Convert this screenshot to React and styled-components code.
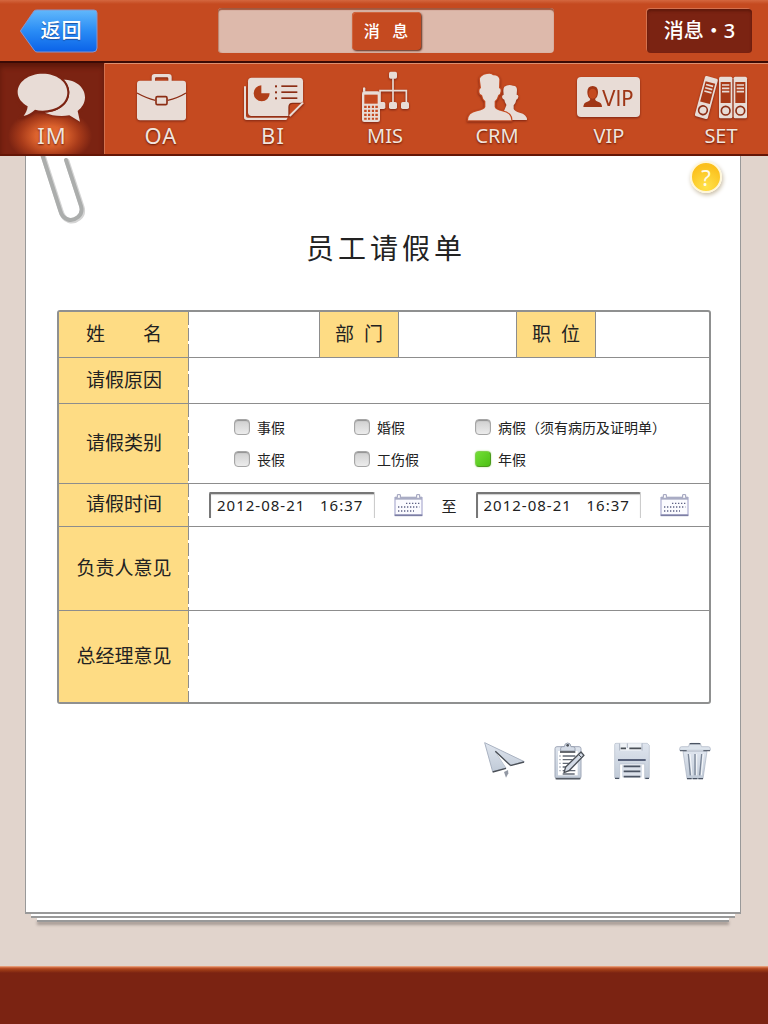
import React, { useState } from "react";
import styled, { createGlobalStyle, css } from "styled-components";

const GlobalStyle = createGlobalStyle`
  *, *::before, *::after { box-sizing: border-box; }
  body {
    margin: 0;
    background: #e1d4cc;
    color: #222;
    font-family: "Noto Sans", "Noto Sans CJK SC", sans-serif;
  }
  button, input, textarea { font: inherit; color: inherit; }
  button { border: 0; padding: 0; background: none; cursor: pointer; }
`;

const Page = styled.div`
  min-height: 100vh;
  display: flex;
  flex-direction: column;
`;

/* ---------- top bar ---------- */

const TopBar = styled.header`
  display: grid;
  grid-template-columns: 1fr 46% 1fr;
  align-items: center;
  height: 63px;
  padding: 0 16px 0 20px;
  background: linear-gradient(#d4673f, #c54a20 4px);
  border-bottom: 2px solid #3b0a05;
`;

const BackButton = styled.button`
  justify-self: start;
  position: relative;
  width: 79px;
  height: 44px;
  padding-left: 4px;
  color: #fff;
  font-size: 20px;
  font-weight: 500;
  line-height: 44px;
  letter-spacing: 1px;
  text-shadow: 0 1px 1px #1a4fa0;

  svg {
    position: absolute;
    inset: 0;
    z-index: 0;
  }
  span { position: relative; }
`;

const SwitchTrack = styled.div`
  display: flex;
  justify-content: center;
  align-items: center;
  height: 45px;
  border-radius: 4px;
  background: #ddb9ab;
  box-shadow: inset 0 2px 1px #a0583f, inset 1px 0 1px #c08a76;
`;

const SwitchButton = styled.button`
  width: 69px;
  height: 38px;
  border-radius: 4px;
  color: #fff;
  background: #c54a20;
  font-size: 16px;
  font-weight: 500;
  line-height: 36px;
  white-space: pre;
  box-shadow: 1px 1px 2px #5b2a1a, inset 1px 1px 0 #d0653e;
`;

const NoticeButton = styled.button`
  justify-self: end;
  width: 105px;
  height: 44px;
  border-radius: 4px;
  color: #fff;
  background: #7b2312;
  font-size: 20px;
  font-weight: 500;
  line-height: 44px;
  white-space: nowrap;
  box-shadow: inset 0 2px 3px #5e180a, -1px -1px 0 #d4714e;
`;

/* ---------- module tabs ---------- */

const Tabs = styled.nav`
  display: flex;
  overflow: hidden;
  height: 93px;
  background: #c54a20;
  border-bottom: 2px solid #641606;
`;

const Tab = styled.a`
  flex: 0 0 112px;
  display: flex;
  flex-direction: column;
  align-items: center;
  padding-top: 7px;
  color: #f1e4dd;
  text-decoration: none;
  box-shadow: inset 0 1px 0 #e08f6d;

  ${(p) =>
    p.$active &&
    css`
      flex-basis: 105px;
      border-right: 1px solid #d4714e;
      box-shadow: inset 0 4px 5px #5e180a;
      background:
        radial-gradient(ellipse 42px 28px at 50px 73px, #ea7138 0%, #dc622d 35%, #a83b1a 70%, transparent 100%),
        #7b2312;
    `}

  svg {
    flex: none;
    filter: drop-shadow(0 1px 1px #7b2312);
  }
`;

const TabLabel = styled.span`
  font-size: ${(p) => (p.$large ? 22 : 20)}px;
  line-height: ${(p) => (p.$large ? 22 : 24)}px;
  letter-spacing: ${(p) => (p.$large ? 1 : 0)}px;
  text-shadow: 0 1px 2px #641606;
`;

/* ---------- sheet of paper ---------- */

const Desk = styled.main`
  flex: 1;
  display: flex;
  flex-direction: column;
  padding: 0 27px 44px 25px;
`;

const Paper = styled.section`
  flex: 1;
  padding: 0 29px 60px 31px;
  background: #fff;
  border: solid #999;
  border-width: 0 1px 2px 1px;
`;

const Leaf = styled.div`
  height: 4px;
  margin: 0 ${(p) => p.$inset}px;
  background: #fff;
  border-bottom: 2px solid #999;
  box-shadow: ${(p) => (p.$last ? "0 3px 3px #a79b95" : "none")};
`;

const PaperTop = styled.div`
  display: flex;
  justify-content: space-between;
  align-items: flex-start;
  height: 72px;
  margin: 0 -11px 0 -17px;
`;

const HelpButton = styled.button`
  width: 32px;
  height: 32px;
  margin-top: 5px;
  border: 2px solid #fff6d8;
  border-radius: 50%;
  color: #fffbe8;
  font-size: 22px;
  line-height: 26px;
  background: radial-gradient(circle at 50% 85%, #ffe24a, #fbc01c 75%);
  box-shadow: 1px 2px 4px #c9bda6;
`;

const Title = styled.h1`
  margin: 0 0 42px;
  padding-left: 4px;
  text-align: center;
  font-size: 28px;
  font-weight: 400;
  line-height: 40px;
  letter-spacing: 4px;
`;

const FormTable = styled.table`
  width: 100%;
  table-layout: fixed;
  border-collapse: separate;
  border-spacing: 0;
  border: 2px solid #8f9090;
  border-radius: 3px;

  col.key { width: 130px; }
  col.subkey { width: 80px; }
  col.name { width: 20%; }
  col.dept { width: 18%; }

  tr:last-child > * { border-bottom: 0; }
`;

const Row = styled.tr`
  height: ${(p) => p.$h}px;
`;

const KeyCell = styled.th`
  padding: 0 0 2px;
  border-bottom: 1px solid #8d8d8d;
  background:
    repeating-linear-gradient(#8d8d8d 0 13px, #fff 13px 16px) right / 1px 100% no-repeat,
    #fedc84;
  font-size: 19px;
  font-weight: 400;
  line-height: 28px;
  white-space: pre;
`;

const SubKeyCell = styled(KeyCell)`
  background: #fedc84;
  border-left: 1px solid #8d8d8d;
  border-right: 1px solid #8d8d8d;
`;

const ValueCell = styled.td`
  height: inherit;
  padding: 0;
  border-bottom: 1px solid #8d8d8d;
`;

const TextField = styled.input`
  display: block;
  width: 100%;
  height: 40px;
  padding: 0 10px;
  border: 0;
  outline: 0;
  background: transparent;
  font-size: 16px;
`;

const Opinion = styled.textarea`
  display: block;
  width: 100%;
  height: 76px;
  padding: 8px 10px;
  border: 0;
  outline: 0;
  resize: none;
  background: transparent;
  font-size: 16px;
`;

const Choices = styled.div`
  display: grid;
  grid-template-columns: 120px 121px 1fr;
  padding: 0 0 2px 45px;
`;

const Choice = styled.label`
  display: flex;
  align-items: center;
  gap: 7px;
  height: 32px;
  font-size: 14px;
  white-space: nowrap;
`;

const Box = styled.input`
  appearance: none;
  flex: none;
  width: 16px;
  height: 16px;
  margin: 0;
  border: 1px solid #a6a6a6;
  border-radius: 4px;
  background: linear-gradient(#cfcfcf, #ececec);
  box-shadow: inset 0 1px 1px #909090;

  &:checked {
    border-color: #7ed04a #4b9a1c #4b9a1c #7ed04a;
    background: linear-gradient(135deg, #72de36, #4cc014);
    box-shadow: 0 0 2px #a9dc8a;
  }
`;

const Period = styled.div`
  display: flex;
  align-items: center;
  gap: 19px;
  padding: 0 20px;
  font-size: 15px;
`;

const DateField = styled.input`
  flex: 1;
  min-width: 0;
  height: 26px;
  padding: 0 0 2px 6px;
  border: solid #777;
  border-width: 2px 1px 0 2px;
  border-right-color: #ccc;
  border-radius: 2px 2px 0 0;
  outline: 0;
  background: #fff;
  font-size: 15px;
  letter-spacing: 1px;
  box-shadow: inset 0 1px 1px #ccc;
`;

const IconButton = styled.button`
  flex: none;
  display: flex;
`;

const Actions = styled.div`
  display: flex;
  justify-content: flex-end;
  align-items: center;
  gap: 29px;
  margin-top: 38px;
`;

const BottomBar = styled.footer`
  height: 58px;
  background: linear-gradient(#f0b18d, #c0532a 2px, #9c3a16 4px, #7b2312 7px);
`;

/* ---------- drawings ---------- */

const CREAM = "#e8dcd6";
const ORANGE = "#c54a20";

const TabIcon = ({ box, children }) => (
  <svg width="70" height="54" viewBox={box} fill={CREAM} aria-hidden="true">
    {children}
  </svg>
);

const ImIcon = () => (
  <TabIcon box="51 210 210 162">
    <path d="M190 239C228 239 255 262 255 292c0 17-9 31-22 41l7 32-32-19c-28 5-54 0-74-8 45-3 74-27 74-62 0-13-7-27-18-37z" />
    <path
      d="M128 221c42 0 74 24 74 56 0 33-32 55-74 55-8 0-16-1-23-3-9 8-20 15-34 19 6-8 11-18 12-29-18-10-30-25-30-42 0-32 33-56 75-56z"
      stroke="#7b2312"
      strokeWidth="12"
      paintOrder="stroke"
    />
  </TabIcon>
);

const OaIcon = () => (
  <TabIcon box="378 210 210 162">
    <path d="M455 244v-13q0-9 9-9h42q9 0 9 9v13h-10v-8q0-4-4-4h-32q-4 0-4 4v8z" />
    <rect x="411" y="242" width="147" height="119" rx="9" />
    <path d="M411 279Q440 295 466 301M503 301Q532 295 558 279" fill="none" stroke="#8c2d14" strokeWidth="4" />
    <rect x="468" y="290" width="33" height="24" rx="4" fill="none" stroke="#8c2d14" strokeWidth="5" />
  </TabIcon>
);

const BiIcon = () => (
  <TabIcon box="54 210 210 162">
    <path d="M72 259h6v88q0 6 6 6h119l-4 7H80q-8 0-8-8z" />
    <path d="M95 233h143q11 0 11 11v60l-42 44H95q-11 0-11-11v-93q0-11 11-11z" />
    <path d="M124 256v24h25a24 24 0 1 1-25-24z" fill="#b03e18" />
    <g fill="#8c2d14">
      <rect x="165" y="256" width="6" height="6" /><rect x="165" y="274" width="6" height="6" /><rect x="165" y="292" width="6" height="6" />
      <rect x="184" y="256" width="48" height="5" /><rect x="184" y="274" width="48" height="5" /><rect x="184" y="292" width="48" height="5" />
    </g>
    <path d="M207 347v-26q0-11 11-11h30v-6h4v6l-44 40z" fill={ORANGE} />
    <path d="M207 348v-27q0-11 11-11h31" fill="none" stroke="#8c2d14" strokeWidth="4" />
    <path d="M209 348l40-40" stroke={CREAM} strokeWidth="6" />
  </TabIcon>
);

const MisIcon = () => (
  <TabIcon box="390 210 210 162">
    <path d="M519 235v75M480 310v-38h79v38" fill="none" stroke={CREAM} strokeWidth="5" />
    <rect x="507" y="215" width="24" height="21" rx="5" />
    <rect x="473" y="306" width="23" height="21" rx="5" />
    <rect x="507" y="306" width="24" height="21" rx="5" />
    <rect x="543" y="306" width="24" height="21" rx="5" />
    <path d="M429 264q3-5 7 0v11h-7z" />
    <rect x="426" y="274" width="54" height="92" rx="7" />
    <rect x="433" y="284" width="40" height="27" fill={ORANGE} />
    <path d="M437 317v42M447 317v42M459 317v42M469 317v42" stroke={ORANGE} strokeWidth="9" strokeDasharray="7 5" />
    <path d="M442 315v46M453 315v46M464 315v46" stroke={CREAM} strokeWidth="4" />
  </TabIcon>
);

const CrmIcon = () => (
  <TabIcon box="93 30 210 162">
    <path d="M220 80q12-8 26-3 12 0 12 13l-1 14q6 1 5 7-1 7-6 8-2 11-8 17v11q3 7 18 11 22 5 22 22h-80l18-44v-2q-5-7-6-15-6-1-7-8 0-6 5-7l-1-12q0-8 3-12z" />
    <path
      d="M150 50q8-7 18-8 14-3 18 4 16-1 19 12l-1 26q6 1 5 9-1 10-7 12-3 12-11 19v17q3 9 22 13 28 5 28 27H111q0-22 27-27 21-4 25-13v-17q-8-7-10-19-8-2-8-12 0-8 5-9l-3-22q-2-8 3-12z"
      stroke={ORANGE}
      strokeWidth="7"
      paintOrder="stroke"
    />
  </TabIcon>
);

const VipIcon = () => (
  <TabIcon box="42 210 210 162">
    <rect x="51" y="231" width="189" height="120" rx="12" />
    <path d="M98 258q16 0 16 18 0 15-9 21 1 6 9 8 12 3 12 16H70q0-13 12-16 8-2 9-8-9-6-9-21 0-18 16-18z" fill="#a03616" />
    <ellipse cx="98" cy="281" rx="12" ry="15" fill={ORANGE} />
    <text x="126" y="318" fontSize="66" fontFamily="DejaVu Sans Condensed, Noto Sans" fill="#9e3616">VIP</text>
  </TabIcon>
);

const Binder = () => (
  <>
    <rect x="0" y="0" width="40" height="125" rx="5" fill={CREAM} />
    <rect x="5" y="16" width="30" height="63" fill="#a83a17" />
    <path d="M9 25h22M9 35h22M9 45h22" stroke={CREAM} strokeWidth="5" />
    <circle cx="20" cy="102" r="13" fill="none" stroke="#8c2d14" strokeWidth="5" />
    <rect x="15" y="97" width="10" height="10" fill={CREAM} />
  </>
);

const SetIcon = () => (
  <TabIcon box="378 210 210 162">
    <g transform="translate(436 227) rotate(15)"><Binder /></g>
    <g transform="translate(477 230)"><Binder /></g>
    <g transform="translate(521 230)"><Binder /></g>
  </TabIcon>
);

const BackShape = () => (
  <svg width="79" height="44" viewBox="0 0 79 44" aria-hidden="true">
    <defs>
      <linearGradient id="backFill" x1="0" y1="0" x2="0" y2="1">
        <stop offset="0" stopColor="#61b8fb" />
        <stop offset=".5" stopColor="#2a8cf5" />
        <stop offset="1" stopColor="#0a62e8" />
      </linearGradient>
    </defs>
    <path d="M14 2Q15 1 17 1H74q3 0 3 3V39q0 4-4 4H17q-2 0-3-2L1 23Q0 22 1 21z" fill="url(#backFill)" stroke="#8c94c8" />
  </svg>
);

const PaperClip = () => (
  <svg width="46" height="70" viewBox="0 0 46 70" fill="none" aria-hidden="true">
    <path d="M2 -2L20 54C23 65 32 66 38 61Q43 57 41 50L26 4" transform="translate(1 1)" stroke="#d5d5d5" strokeWidth="5" strokeLinecap="round" />
    <path d="M2 -2L20 54C23 65 32 66 38 61Q43 57 41 50L26 4" stroke="#abadac" strokeWidth="4" strokeLinecap="round" />
  </svg>
);

const CalendarIcon = () => (
  <svg width="29" height="24" viewBox="0 0 87 72" aria-hidden="true">
    <rect x="3" y="14" width="81" height="52" fill="#fbfbff" stroke="#b4b5d6" strokeWidth="4" />
    <path d="M3 11h81v9H3z" fill="#a9acc4" />
    <path d="M2 67h83" stroke="#7c7ea4" strokeWidth="5" />
    <path d="M10 14V5h9v9M68 14V5h9v9" fill="#fff" stroke="#9a9cb8" strokeWidth="3" />
    <path d="M36 31h40M12 42h64M12 54h48" stroke="#5e6285" strokeWidth="4" strokeDasharray="4 5" />
  </svg>
);

const Metal = ({ id }) => (
  <defs>
    <linearGradient id={id} x1="0" y1="0" x2="0" y2="1">
      <stop offset="0" stopColor="#dfe5ee" />
      <stop offset="1" stopColor="#c0cad7" />
    </linearGradient>
  </defs>
);

const SendIcon = () => (
  <svg width="41" height="38" viewBox="0 0 123 114" aria-hidden="true">
    <Metal id="sendMetal" />
    <path d="M2 2L26 89L67 78L34 28L79 70L121 59z" fill="url(#sendMetal)" stroke="#a9b2c1" strokeWidth="3" strokeLinejoin="round" />
    <path d="M34 28L67 78L77 72z" fill="#fff" />
    <path d="M26 90L66 79M79 71L120 60M34 28L79 70" stroke="#4b5057" strokeWidth="4" />
    <path d="M60 90L72 84L73 94L66 107z" fill="#9298a4" />
  </svg>
);

const ClipboardIcon = () => (
  <svg width="31" height="38" viewBox="0 0 93 114" aria-hidden="true">
    <Metal id="boardMetal" />
    <rect x="3" y="14" width="78" height="96" rx="6" fill="url(#boardMetal)" stroke="#a0a8b8" strokeWidth="3" />
    <path d="M5 110h74" stroke="#555b64" strokeWidth="5" />
    <rect x="12" y="27" width="59" height="73" fill="#fff" />
    <path d="M20 27v-8q0-5 6-5h5q1-11 10-11t10 11h6q6 0 6 5v8z" fill="#d4dbe6" stroke="#9aa2b1" strokeWidth="3" />
    <circle cx="41" cy="10" r="4" fill="#4b5057" />
    <path d="M18 30h46" stroke="#4b5057" strokeWidth="5" />
    <path d="M26 42h38M26 53h30M26 64h28M26 75h16M26 86h38M26 96h36" stroke="#626975" strokeWidth="4" />
    <path d="M16 42h4M16 53h4M16 64h4M16 75h4M16 86h4" stroke="#9aa2b1" strokeWidth="4" />
    <path d="M30 92l5-17 46-45 9 10-45 46z" fill="#d4dbe6" stroke="#4b5057" strokeWidth="4" strokeLinejoin="round" />
    <path d="M73 37l10 10" stroke="#4b5057" strokeWidth="3" />
  </svg>
);

const SaveIcon = () => (
  <svg width="36" height="38" viewBox="0 0 108 114" aria-hidden="true">
    <Metal id="saveMetal" />
    <path d="M2 8q0-4 4-4h94l6 6v96q0 4-4 4H92V66H17v44H6q-4 0-4-4z" fill="url(#saveMetal)" stroke="#b4bdca" strokeWidth="2" />
    <path d="M15 4h69v22H15z" fill="#eff2f6" />
    <path d="M20 19h16M46 19h36" stroke="#4b5057" strokeWidth="5" />
    <path d="M17 4v22M40 4v14M84 4v22" stroke="#a9b2c1" strokeWidth="3" />
    <path d="M12 54h83" stroke="#3f4964" strokeWidth="5" />
    <path d="M24 68h60v38H24z" fill="#dbe1ea" />
    <path d="M29 73h50M29 88h50M29 104h50" stroke="#4b5463" strokeWidth="5" />
    <path d="M3 109h12M94 109h11" stroke="#4b5463" strokeWidth="4" />
  </svg>
);

const TrashIcon = () => (
  <svg width="32" height="38" viewBox="0 0 96 114" aria-hidden="true">
    <Metal id="trashMetal" />
    <path d="M12 28h72l-12 82H24z" fill="url(#trashMetal)" stroke="#a9b2c1" strokeWidth="2" />
    <path d="M29 14q0-10 8-10h22q8 0 8 10h21q6 0 6 6v5H2v-5q0-6 6-6z" fill="#dde4ec" stroke="#a9b2c1" strokeWidth="2" />
    <path d="M32 5h32" stroke="#4b5463" strokeWidth="4" />
    <path d="M3 26h20M73 26h20" stroke="#5d6572" strokeWidth="4" />
    <path d="M28 36l6 64M48 36v64M68 36l-6 64" stroke="#7b8697" strokeWidth="4" />
    <path d="M33 36l6 64M53 36v64M73 36l-6 64" stroke="#f6f8fa" strokeWidth="3" />
    <path d="M24 110h48" stroke="#4b5463" strokeWidth="4" strokeDasharray="14 3" />
  </svg>
);

/* ---------- page ---------- */

const modules = [
  { name: "IM", Icon: ImIcon, large: true },
  { name: "OA", Icon: OaIcon, large: true },
  { name: "BI", Icon: BiIcon, large: true },
  { name: "MIS", Icon: MisIcon },
  { name: "CRM", Icon: CrmIcon },
  { name: "VIP", Icon: VipIcon },
  { name: "SET", Icon: SetIcon },
];

const leaveTypes = ["事假", "婚假", "病假（须有病历及证明单）", "丧假", "工伤假", "年假"];

const actions = [
  { name: "提交", Icon: SendIcon },
  { name: "填写", Icon: ClipboardIcon },
  { name: "保存", Icon: SaveIcon },
  { name: "删除", Icon: TrashIcon },
];

export default function App() {
  const [checked, setChecked] = useState(["年假"]);
  const toggle = (type) =>
    setChecked((list) => (list.includes(type) ? list.filter((t) => t !== type) : [...list, type]));

  return (
    <Page>
      <GlobalStyle />
      <TopBar>
        <BackButton type="button">
          <BackShape />
          <span>返回</span>
        </BackButton>
        <SwitchTrack>
          <SwitchButton type="button">{"消   息"}</SwitchButton>
        </SwitchTrack>
        <NoticeButton type="button">消息・3</NoticeButton>
      </TopBar>

      <Tabs>
        {modules.map(({ name, Icon, large }) => (
          <Tab key={name} href={`#${name}`} $active={name === "IM"}>
            <Icon />
            <TabLabel $large={large}>{name}</TabLabel>
          </Tab>
        ))}
      </Tabs>

      <Desk>
        <Paper>
          <PaperTop>
            <PaperClip />
            <HelpButton type="button" aria-label="帮助">?</HelpButton>
          </PaperTop>
          <Title>员工请假单</Title>

          <FormTable>
            <colgroup>
              <col className="key" />
              <col className="name" />
              <col className="subkey" />
              <col className="dept" />
              <col className="subkey" />
              <col />
            </colgroup>
            <tbody>
              <Row $h={46}>
                <KeyCell scope="row"><label htmlFor="name">姓　　名</label></KeyCell>
                <ValueCell><TextField id="name" /></ValueCell>
                <SubKeyCell><label htmlFor="dept">{"部  门"}</label></SubKeyCell>
                <ValueCell><TextField id="dept" /></ValueCell>
                <SubKeyCell><label htmlFor="post">{"职  位"}</label></SubKeyCell>
                <ValueCell><TextField id="post" /></ValueCell>
              </Row>
              <Row $h={46}>
                <KeyCell scope="row"><label htmlFor="reason">请假原因</label></KeyCell>
                <ValueCell colSpan={5}><TextField id="reason" /></ValueCell>
              </Row>
              <Row $h={80}>
                <KeyCell scope="row">请假类别</KeyCell>
                <ValueCell colSpan={5}>
                  <Choices>
                    {leaveTypes.map((type) => (
                      <Choice key={type}>
                        <Box type="checkbox" checked={checked.includes(type)} onChange={() => toggle(type)} />
                        {type}
                      </Choice>
                    ))}
                  </Choices>
                </ValueCell>
              </Row>
              <Row $h={43}>
                <KeyCell scope="row">请假时间</KeyCell>
                <ValueCell colSpan={5}>
                  <Period>
                    <DateField aria-label="开始时间" defaultValue="2012-08-21   16:37" />
                    <IconButton type="button" aria-label="选择开始时间"><CalendarIcon /></IconButton>
                    <span>至</span>
                    <DateField aria-label="结束时间" defaultValue="2012-08-21   16:37" />
                    <IconButton type="button" aria-label="选择结束时间"><CalendarIcon /></IconButton>
                  </Period>
                </ValueCell>
              </Row>
              <Row $h={84}>
                <KeyCell scope="row"><label htmlFor="lead">负责人意见</label></KeyCell>
                <ValueCell colSpan={5}><Opinion id="lead" /></ValueCell>
              </Row>
              <Row $h={91}>
                <KeyCell scope="row"><label htmlFor="boss">总经理意见</label></KeyCell>
                <ValueCell colSpan={5}><Opinion id="boss" /></ValueCell>
              </Row>
            </tbody>
          </FormTable>

          <Actions>
            {actions.map(({ name, Icon }) => (
              <IconButton key={name} type="button" aria-label={name}><Icon /></IconButton>
            ))}
          </Actions>
        </Paper>
        <Leaf $inset={6} />
        <Leaf $inset={12} $last />
      </Desk>
      <BottomBar />
    </Page>
  );
}
